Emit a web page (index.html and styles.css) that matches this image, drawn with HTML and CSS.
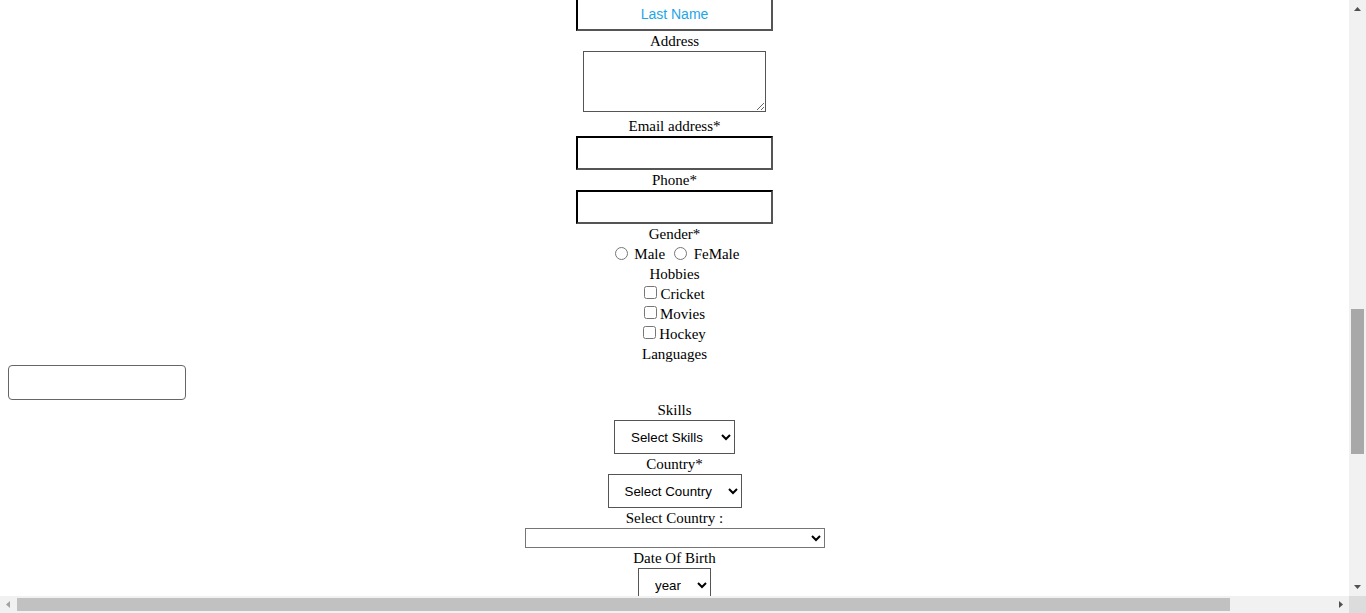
FILE: index.html
```html
<!DOCTYPE html>
<html lang="en">
<head>
<meta charset="utf-8">
<title>Registration Form</title>
<link rel="stylesheet" href="styles.css">
</head>
<body>
<div class="viewport">
  <form class="form">
    <input class="field" type="text" placeholder="Last Name">
    <label class="lbl">Address</label>
    <textarea class="address"></textarea>
    <label class="lbl">Email address*</label>
    <input class="field" type="email">
    <label class="lbl">Phone*</label>
    <input class="field" type="tel">
    <div class="lbl">Gender*</div>
    <div class="row"><input type="radio" name="gender" class="radio"> Male <input type="radio" name="gender" class="radio"> FeMale</div>
    <div class="lbl">Hobbies</div>
    <div class="row row-check"><input type="checkbox" class="check">Cricket</div>
    <div class="row row-check"><input type="checkbox" class="check">Movies</div>
    <div class="row row-check"><input type="checkbox" class="check">Hockey</div>
    <div class="lbl">Languages</div>
    <div class="multi"><button type="button" class="multi-btn"></button></div>
    <div class="lbl">Skills</div>
    <select class="sel sel-skills"><option>Select Skills</option></select>
    <div class="lbl">Country*</div>
    <select class="sel sel-country"><option>Select Country</option></select>
    <div class="lbl">Select Country :</div>
    <select class="sel-wide"><option></option></select>
    <div class="lbl">Date Of Birth</div>
    <select class="sel sel-year"><option>year</option></select>
  </form>
</div>
<div class="vbar">
  <div class="sb-btn"><svg width="17" height="17" viewBox="0 0 17 17"><path d="M5 11h7l-3.5-4z" fill="#505050"/></svg></div>
  <div class="vtrack"><div class="vthumb"></div></div>
  <div class="sb-btn"><svg width="17" height="17" viewBox="0 0 17 17"><path d="M5 6h7l-3.5 4z" fill="#505050"/></svg></div>
</div>
<div class="hbar">
  <div class="sb-btn"><svg width="17" height="17" viewBox="0 0 17 17"><path d="M10 5v7l-4-3.5z" fill="#a3a3a3"/></svg></div>
  <div class="htrack"><div class="hthumb"></div></div>
  <div class="sb-btn"><svg width="17" height="17" viewBox="0 0 17 17"><path d="M7 5v7l4-3.5z" fill="#505050"/></svg></div>
</div>
<div class="corner"></div>
</body>
</html>
```
FILE: styles.css
```css
html, body {
  margin: 0;
  padding: 0;
  background: #fff;
}
body {
  font-family: "Liberation Serif", "Times New Roman", serif;
  font-size: 15px;
  color: #000;
  width: 1366px;
  height: 613px;
  overflow: hidden;
}
.viewport {
  width: 1349px;
  height: 596px;
  overflow: hidden;
}
.form {
  display: flex;
  flex-direction: column;
  align-items: center;
  margin: -3px 0 0;
  padding: 0 8px;
}
.lbl {
  display: block;
  height: 20px;
  line-height: 20px;
  white-space: nowrap;
}
.field {
  box-sizing: border-box;
  width: 197px;
  height: 34px;
  margin: 0;
  padding: 0 4px;
  border: 2px solid;
  border-color: #000 #555 #555 #000;
  background: #fff;
  font: 14px "Liberation Sans", Arial, sans-serif;
  text-align: center;
  outline: none;
}
.field::placeholder {
  color: #1ea6e5;
  opacity: 1;
}
.address {
  box-sizing: border-box;
  width: 183px;
  height: 61px;
  margin: 0 0 4px;
  padding: 2px;
  border: 1px solid #555;
  background: #fff;
  font: 13.333px "Liberation Mono", monospace;
}
.row {
  height: 20px;
  line-height: 20px;
  white-space: nowrap;
}
.row-check {
  padding-right: 4px;
}
.radio {
  width: 13px;
  height: 13px;
  margin: 3px 3px 0 5px;
  vertical-align: -1px;
}
.check {
  width: 13px;
  height: 13px;
  margin: 1px 3px 5px 4px;
}
.multi {
  align-self: stretch;
  margin-top: 1px;
}
.multi-btn {
  display: block;
  box-sizing: border-box;
  width: 178px;
  height: 35px;
  margin: 0;
  padding: 0;
  border: 1px solid #666;
  border-radius: 4px;
  background: #fff;
}
.sel {
  box-sizing: border-box;
  height: 34px;
  margin: 0;
  padding: 0 0 0 12px;
  border: 1px solid #555;
  border-radius: 0;
  background-color: #fff;
  color: #000;
  font: 13.333px "Liberation Sans", Arial, sans-serif;
}
.sel-skills { width: 121px; }
.sel-country { width: 134px; }
.sel-year { width: 73px; }
.sel-wide {
  box-sizing: border-box;
  width: 300px;
  height: 20px;
  margin: 0;
  padding: 0;
  border: 1px solid #767676;
  border-radius: 0;
  background-color: #fff;
  font: 13.333px "Liberation Sans", Arial, sans-serif;
}
.vbar {
  position: fixed;
  top: 0;
  right: 0;
  width: 17px;
  height: 596px;
  background: #f1f1f1;
  display: flex;
  flex-direction: column;
}
.hbar {
  position: fixed;
  left: 0;
  bottom: 0;
  width: 1349px;
  height: 17px;
  background: #f1f1f1;
  display: flex;
}
.sb-btn {
  width: 17px;
  height: 17px;
  flex: none;
}
.sb-btn svg { display: block; }
.vtrack { flex: 1; }
.vthumb {
  width: 13px;
  height: 145px;
  margin: 292px 0 0 2px;
  background: #a8a8a8;
}
.htrack { flex: 1; }
.hthumb {
  width: 1213px;
  height: 13px;
  margin: 2px 0 0;
  background: #c1c1c1;
}
.corner {
  position: fixed;
  right: 0;
  bottom: 0;
  width: 17px;
  height: 17px;
  background: #dcdcdc;
}
```
